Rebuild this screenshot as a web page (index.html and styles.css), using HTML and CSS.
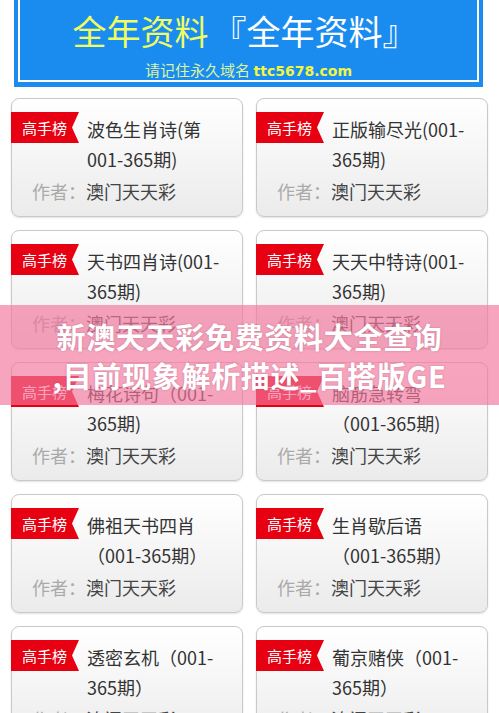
FILE: index.html
```html
<!DOCTYPE html>
<html lang="zh-CN">
<head>
<meta charset="utf-8">
<title>全年资料</title>
<link rel="stylesheet" href="styles.css">
</head>
<body>
<header class="banner">
  <div class="banner-inner">
    <div class="banner-title"><span class="yellow">全年资料</span><span class="white">『全年资料』</span></div>
    <div class="banner-sub"><span class="sub-cn">请记住永久域名</span> <span class="sub-url">ttc5678.com</span></div>
  </div>
</header>

<main class="grid">
  <div class="card">
    <div class="top"><span class="badge">高手榜</span><div class="title"><span class="line">波色生肖诗(第</span><span class="line">001-365期)</span></div></div>
    <div class="author"><span class="label">作者：</span>澳门天天彩</div>
  </div>
  <div class="card">
    <div class="top"><span class="badge">高手榜</span><div class="title"><span class="line">正版输尽光(001-</span><span class="line">365期)</span></div></div>
    <div class="author"><span class="label">作者：</span>澳门天天彩</div>
  </div>
  <div class="card">
    <div class="top"><span class="badge">高手榜</span><div class="title"><span class="line">天书四肖诗(001-</span><span class="line">365期)</span></div></div>
    <div class="author"><span class="label">作者：</span>澳门天天彩</div>
  </div>
  <div class="card">
    <div class="top"><span class="badge">高手榜</span><div class="title"><span class="line">天天中特诗(001-</span><span class="line">365期)</span></div></div>
    <div class="author"><span class="label">作者：</span>澳门天天彩</div>
  </div>
  <div class="card">
    <div class="top"><span class="badge">高手榜</span><div class="title"><span class="line">梅花诗句（001-</span><span class="line">365期)</span></div></div>
    <div class="author"><span class="label">作者：</span>澳门天天彩</div>
  </div>
  <div class="card">
    <div class="top"><span class="badge">高手榜</span><div class="title"><span class="line">脑筋急转弯</span><span class="line">（001-365期)</span></div></div>
    <div class="author"><span class="label">作者：</span>澳门天天彩</div>
  </div>
  <div class="card">
    <div class="top"><span class="badge">高手榜</span><div class="title"><span class="line">佛祖天书四肖</span><span class="line">（001-365期）</span></div></div>
    <div class="author"><span class="label">作者：</span>澳门天天彩</div>
  </div>
  <div class="card">
    <div class="top"><span class="badge">高手榜</span><div class="title"><span class="line">生肖歇后语</span><span class="line">（001-365期）</span></div></div>
    <div class="author"><span class="label">作者：</span>澳门天天彩</div>
  </div>
  <div class="card">
    <div class="top"><span class="badge">高手榜</span><div class="title"><span class="line">透密玄机（001-</span><span class="line">365期）</span></div></div>
    <div class="author"><span class="label">作者：</span>澳门天天彩</div>
  </div>
  <div class="card">
    <div class="top"><span class="badge">高手榜</span><div class="title"><span class="line">葡京赌侠（001-</span><span class="line">365期）</span></div></div>
    <div class="author"><span class="label">作者：</span>澳门天天彩</div>
  </div>
</main>

<div class="overlay">
  <div class="overlay-text"><span class="oline">新澳天天彩免费资料大全查询</span><span class="oline">,目前现象解析描述_百搭版GE</span></div>
</div>
</body>
</html>
```

FILE: styles.css
```css
html, body {
  margin: 0;
  padding: 0;
  background: #ffffff;
}
body {
  font-family: "Noto Sans CJK SC", "Noto Sans", sans-serif;
  color: #333333;
  position: relative;
  width: 499px;
  overflow: hidden;
}

.banner {
  margin: 0 16px 0 14px;
  padding: 0 4px 5px 4px;
  background: #1a8cef;
}
.banner-inner {
  height: 80px;
  border: 2px solid #ffffff;
  border-top: none;
  background: #1a8cef;
  text-align: center;
}
.banner-title {
  padding-top: 11px;
  height: 40px;
  line-height: 40px;
  font-size: 34px;
  white-space: nowrap;
  padding-right: 8px;
}
.banner-title .yellow {
  color: #effd62;
  margin-right: 4px;
}
.banner-title .white {
  color: #ffffff;
}
.banner-sub {
  margin-top: 8px;
  line-height: 20px;
  height: 20px;
  white-space: nowrap;
}
.sub-cn {
  font-size: 15px;
  color: #dcf3a0;
}
.sub-url {
  font-family: "DejaVu Sans", sans-serif;
  font-weight: bold;
  font-size: 14px;
  color: #f2f542;
}

.grid {
  display: grid;
  grid-template-columns: 232px 232px;
  column-gap: 13px;
  row-gap: 13px;
  margin: 11px 12px 0 11px;
}
.card {
  border: 1px solid #c9c9c9;
  border-radius: 8px;
  background: linear-gradient(#ffffff, #ebebeb);
  box-shadow: 0 1px 2px rgba(0, 0, 0, 0.12);
  padding: 13px 0 11px 0;
  height: 93px;
}
.top {
  display: flex;
  align-items: flex-start;
}
.badge {
  flex: none;
  width: 57px;
  height: 31px;
  line-height: 31px;
  margin-left: -1px;
  padding-left: 11px;
  background: #e60012;
  color: #ffffff;
  font-size: 15px;
  clip-path: polygon(0 0, 100% 0, calc(100% - 7px) 50%, 100% 100%, 0 100%);
}
.title {
  margin-top: 2px;
  margin-left: 8px;
  font-size: 18px;
  line-height: 30px;
  color: #333333;
  display: flex;
  flex-direction: column;
}
.line {
  white-space: nowrap;
}
.author {
  margin-top: 2px;
  padding-left: 20px;
  font-size: 18px;
  line-height: 30px;
  color: #444444;
  white-space: nowrap;
}
.author .label {
  color: #aaaaaa;
}

.overlay {
  position: absolute;
  left: 0;
  right: 0;
  top: 305px;
  height: 100px;
  background: rgba(243, 119, 158, 0.67);
  overflow: hidden;
}
.overlay-text {
  width: 392px;
  margin: 0 auto;
  padding-top: 12px;
  height: 78px;
  overflow: hidden;
  display: flex;
  flex-direction: column;
  align-items: center;
}
.oline {
  font-size: 29px;
  line-height: 39px;
  font-weight: bold;
  color: #ffffff;
  letter-spacing: 0.7px;
  white-space: nowrap;
  text-shadow: 0 0 2px rgba(120, 40, 70, 0.35);
}
```
